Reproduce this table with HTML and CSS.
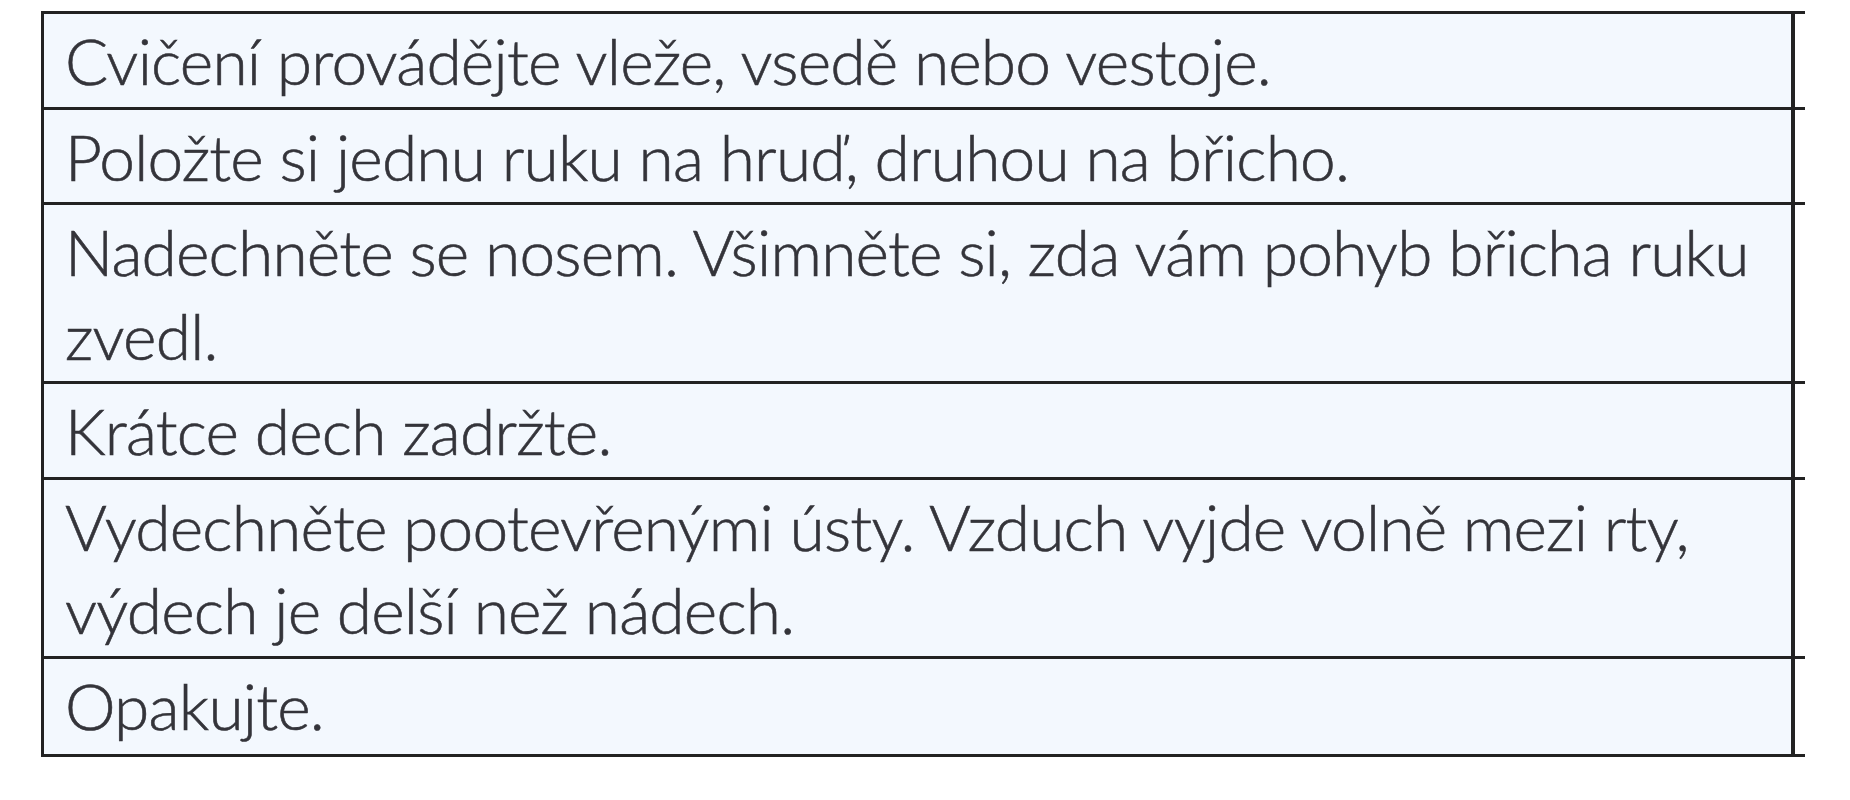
FILE: index.html
```html
<!DOCTYPE html>
<html lang="cs">
<head>
<meta charset="utf-8">
<title>Cvičení</title>
<link rel="stylesheet" href="styles.css">
</head>
<body>
<div class="table">
  <div class="row"><div class="cell">Cvičení provádějte vleže, vsedě nebo vestoje.</div></div>
  <div class="row"><div class="cell">Položte si jednu ruku na hruď, druhou na břicho.</div></div>
  <div class="row"><div class="cell">Nadechněte se nosem. Všimněte si, zda vám pohyb břicha ruku zvedl.</div></div>
  <div class="row"><div class="cell">Krátce dech zadržte.</div></div>
  <div class="row"><div class="cell">Vydechněte pootevřenými ústy. Vzduch vyjde volně mezi rty, výdech je delší než nádech.</div></div>
  <div class="row"><div class="cell">Opakujte.</div></div>
</div>
</body>
</html>
```

FILE: styles.css
```css
html, body {
  margin: 0;
  padding: 0;
  background: #ffffff;
}
body {
  padding: 11px 0 0 41px;
  font-family: Lato, "Liberation Sans", sans-serif;
}
.table {
  width: 1764px;
  border-top: 3px solid #222222;
}
.row {
  display: flex;
  border-bottom: 3px solid #222222;
}
.cell {
  flex: 0 0 1754px;
  box-sizing: border-box;
  border-left: 3px solid #222222;
  border-right: 4px solid #222222;
  background: #f3f8fe;
  color: #34343a;
  -webkit-text-stroke: 0.6px #34343a;
  font-size: 64px;
  font-weight: 300;
  letter-spacing: -0.8px;
  line-height: 83.5px;
  padding: 5px 8px 4px 21px;
}
.row:last-child .cell {
  padding-bottom: 7px;
}
```
